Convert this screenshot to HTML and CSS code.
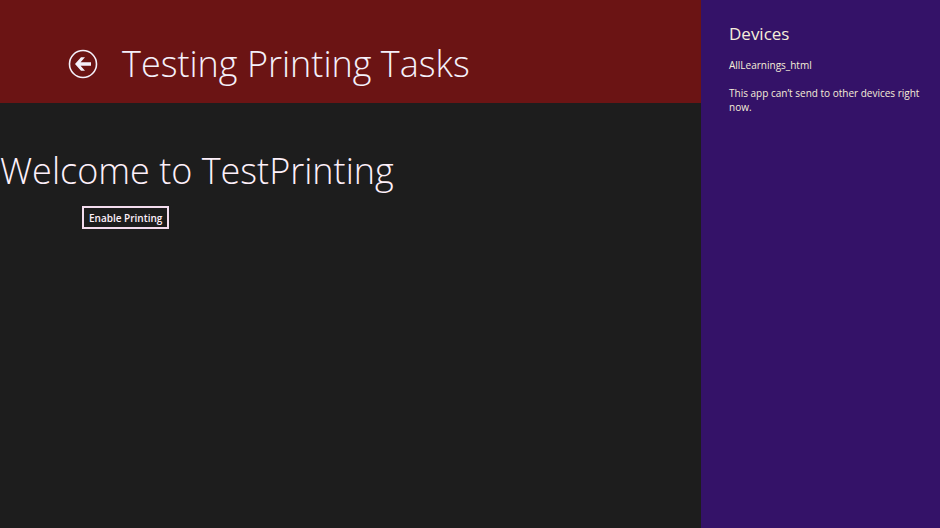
FILE: index.html
```html
<!DOCTYPE html>
<html lang="en">
<head>
<meta charset="utf-8">
<title>Testing Printing Tasks</title>
<link rel="stylesheet" href="styles.css">
</head>
<body>
<div class="app">
  <header class="app-header">
    <button class="back" type="button" aria-label="Back">
      <svg viewBox="0 0 30 30" width="30" height="30">
        <circle cx="15" cy="15" r="13.5" fill="none" stroke="currentColor" stroke-width="1.6"/>
        <path fill="currentColor" d="M7 15L13 8.2H17L12.6 13.3H23V16.7H12.6L17 21.8H13Z"/>
      </svg>
    </button>
    <h1 class="title">Testing Printing Tasks</h1>
  </header>
  <main class="content">
    <h2 class="title">Welcome to TestPrinting</h2>
    <button class="enable" type="button">Enable Printing</button>
  </main>
</div>
<aside class="devices">
  <h2 class="devices-title">Devices</h2>
  <p>AllLearnings_html</p>
  <p>This app can’t send to other devices right now.</p>
</aside>
</body>
</html>
```

FILE: styles.css
```css
* { box-sizing: border-box; }
body {
  margin: 0;
  min-height: 100vh;
  display: flex;
  background: #1d1d1d;
  color: #fff;
  font-family: "Open Sans", sans-serif;
}
button { font-family: inherit; color: inherit; background: none; cursor: pointer; }
.app { flex: 1; color: #fdf0fa; }
.app-header {
  display: flex;
  align-items: center;
  gap: 24px;
  padding: 38px 0 13px 68px;
  background: #6b1414;
  color: #f4f0fa;
}
.back { border: 0; padding: 0; height: 30px; }
.back svg { display: block; }
.title { margin: 0; font-size: 36px; line-height: 52px; font-weight: 300; }
.content { padding-top: 42px; }
.enable {
  display: block;
  margin: 9px 0 0 82px;
  height: 23px;
  padding: 0 5px;
  border: 2px solid #f3dcee;
  font-size: 10px;
  font-weight: 600;
}
.devices {
  width: 239px;
  padding: 22px 16px 22px 28px;
  background: #341268;
  color: #f6eed8;
  font-size: 10px;
  line-height: 14px;
}
.devices-title { margin: 0 0 12px; font-size: 17px; line-height: 24px; font-weight: 400; }
.devices p { margin: 0 0 14px; }
```
